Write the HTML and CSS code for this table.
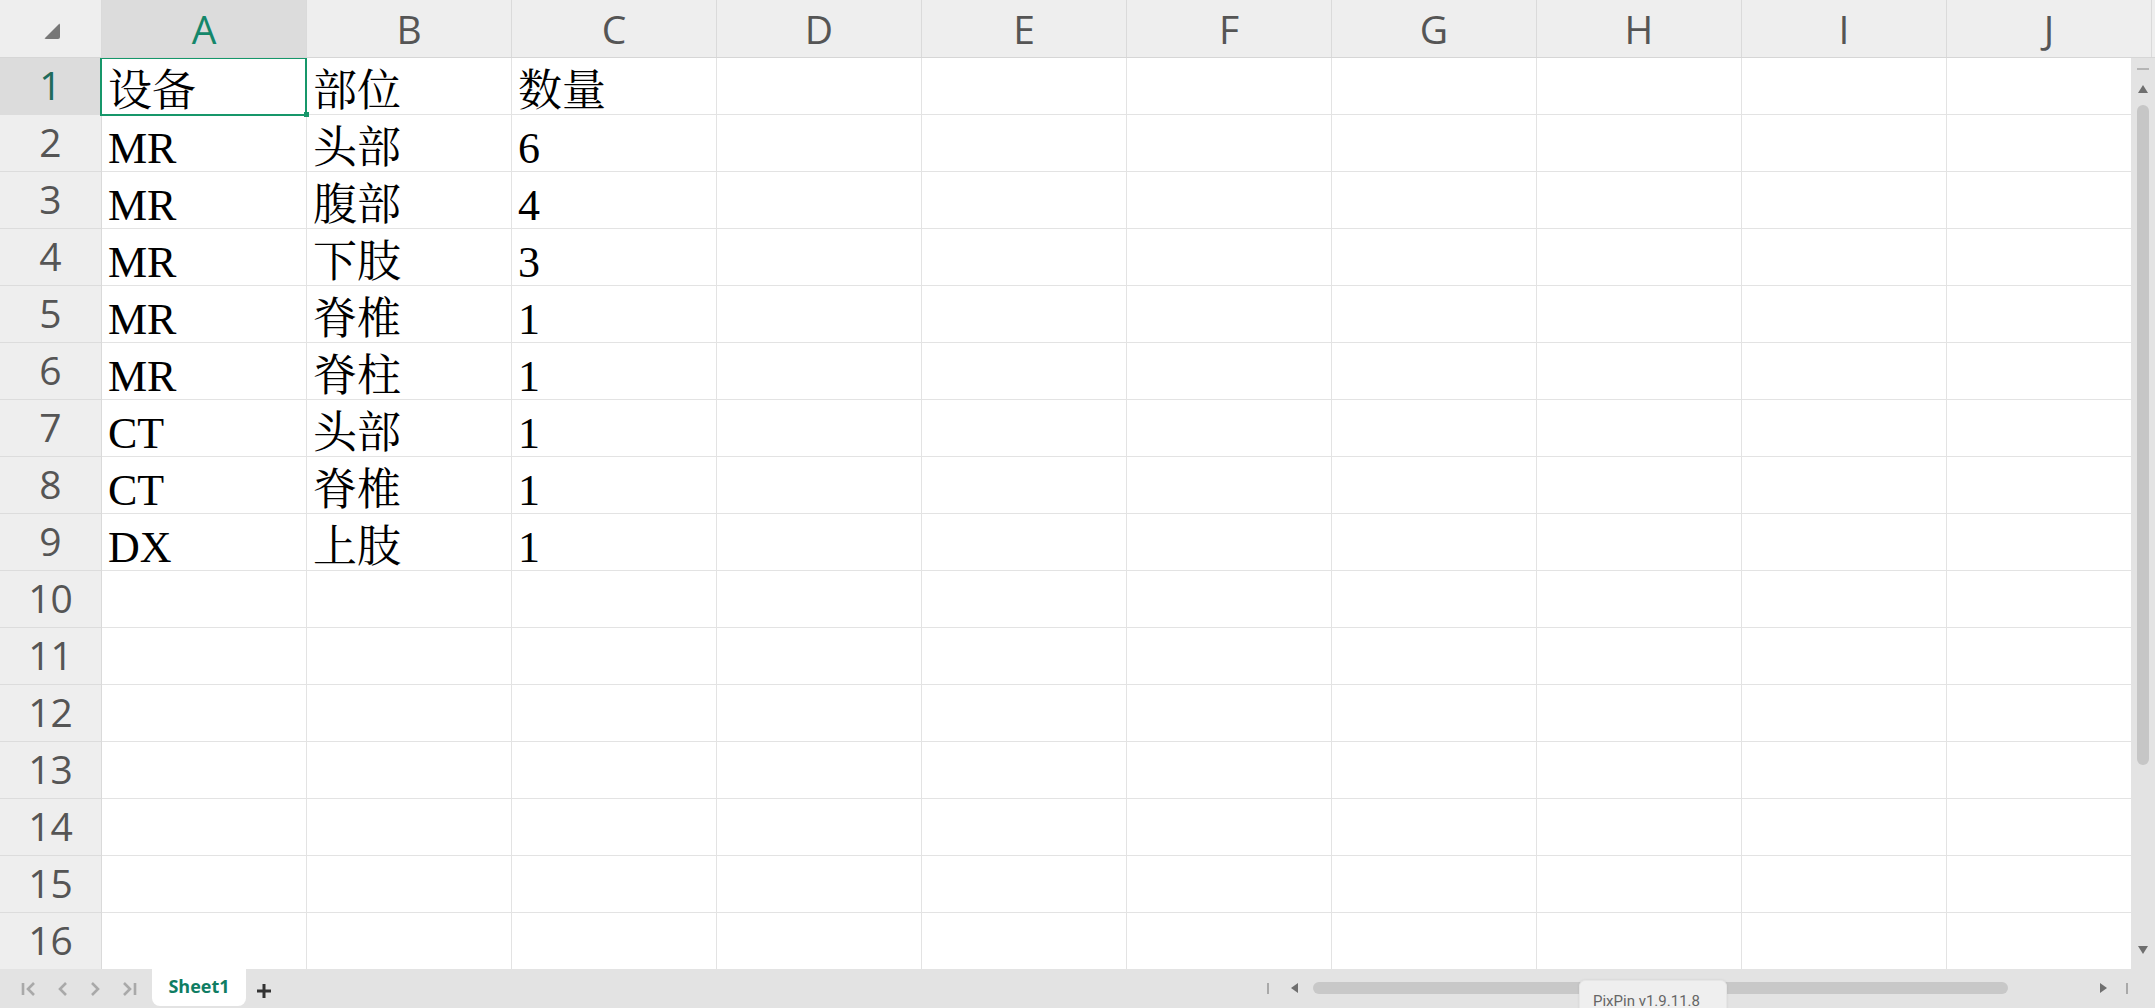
FILE: index.html
```html
<!DOCTYPE html>
<html lang="zh-CN">
<head>
    <meta charset="UTF-8">
    <meta name="viewport" content="width=device-width, initial-scale=1.0">
    <title>Sheet1</title>
    <link rel="stylesheet" href="styles.css">
</head>
<body>
    <div class="app">
        <div class="colheads">
            <div class="corner"><span class="tri"></span></div>
            <div class="ch active">A</div>
            <div class="ch">B</div>
            <div class="ch">C</div>
            <div class="ch">D</div>
            <div class="ch">E</div>
            <div class="ch">F</div>
            <div class="ch">G</div>
            <div class="ch">H</div>
            <div class="ch">I</div>
            <div class="ch">J</div>
        </div>

        <div class="main">
            <div class="sheet">
                <div class="row"><div class="rh active">1</div><div class="c sel">设备</div><div class="c">部位</div><div class="c">数量</div><div class="c"></div><div class="c"></div><div class="c"></div><div class="c"></div><div class="c"></div><div class="c"></div><div class="c"></div></div>
                <div class="row"><div class="rh">2</div><div class="c">MR</div><div class="c">头部</div><div class="c">6</div><div class="c"></div><div class="c"></div><div class="c"></div><div class="c"></div><div class="c"></div><div class="c"></div><div class="c"></div></div>
                <div class="row"><div class="rh">3</div><div class="c">MR</div><div class="c">腹部</div><div class="c">4</div><div class="c"></div><div class="c"></div><div class="c"></div><div class="c"></div><div class="c"></div><div class="c"></div><div class="c"></div></div>
                <div class="row"><div class="rh">4</div><div class="c">MR</div><div class="c">下肢</div><div class="c">3</div><div class="c"></div><div class="c"></div><div class="c"></div><div class="c"></div><div class="c"></div><div class="c"></div><div class="c"></div></div>
                <div class="row"><div class="rh">5</div><div class="c">MR</div><div class="c">脊椎</div><div class="c">1</div><div class="c"></div><div class="c"></div><div class="c"></div><div class="c"></div><div class="c"></div><div class="c"></div><div class="c"></div></div>
                <div class="row"><div class="rh">6</div><div class="c">MR</div><div class="c">脊柱</div><div class="c">1</div><div class="c"></div><div class="c"></div><div class="c"></div><div class="c"></div><div class="c"></div><div class="c"></div><div class="c"></div></div>
                <div class="row"><div class="rh">7</div><div class="c">CT</div><div class="c">头部</div><div class="c">1</div><div class="c"></div><div class="c"></div><div class="c"></div><div class="c"></div><div class="c"></div><div class="c"></div><div class="c"></div></div>
                <div class="row"><div class="rh">8</div><div class="c">CT</div><div class="c">脊椎</div><div class="c">1</div><div class="c"></div><div class="c"></div><div class="c"></div><div class="c"></div><div class="c"></div><div class="c"></div><div class="c"></div></div>
                <div class="row"><div class="rh">9</div><div class="c">DX</div><div class="c">上肢</div><div class="c">1</div><div class="c"></div><div class="c"></div><div class="c"></div><div class="c"></div><div class="c"></div><div class="c"></div><div class="c"></div></div>
                <div class="row"><div class="rh">10</div><div class="c"></div><div class="c"></div><div class="c"></div><div class="c"></div><div class="c"></div><div class="c"></div><div class="c"></div><div class="c"></div><div class="c"></div><div class="c"></div></div>
                <div class="row"><div class="rh">11</div><div class="c"></div><div class="c"></div><div class="c"></div><div class="c"></div><div class="c"></div><div class="c"></div><div class="c"></div><div class="c"></div><div class="c"></div><div class="c"></div></div>
                <div class="row"><div class="rh">12</div><div class="c"></div><div class="c"></div><div class="c"></div><div class="c"></div><div class="c"></div><div class="c"></div><div class="c"></div><div class="c"></div><div class="c"></div><div class="c"></div></div>
                <div class="row"><div class="rh">13</div><div class="c"></div><div class="c"></div><div class="c"></div><div class="c"></div><div class="c"></div><div class="c"></div><div class="c"></div><div class="c"></div><div class="c"></div><div class="c"></div></div>
                <div class="row"><div class="rh">14</div><div class="c"></div><div class="c"></div><div class="c"></div><div class="c"></div><div class="c"></div><div class="c"></div><div class="c"></div><div class="c"></div><div class="c"></div><div class="c"></div></div>
                <div class="row"><div class="rh">15</div><div class="c"></div><div class="c"></div><div class="c"></div><div class="c"></div><div class="c"></div><div class="c"></div><div class="c"></div><div class="c"></div><div class="c"></div><div class="c"></div></div>
                <div class="row"><div class="rh">16</div><div class="c"></div><div class="c"></div><div class="c"></div><div class="c"></div><div class="c"></div><div class="c"></div><div class="c"></div><div class="c"></div><div class="c"></div><div class="c"></div></div>
            </div>

            <div class="vscroll">
                <span class="dash"></span>
                <svg class="arrow" width="10" height="8" viewBox="0 0 10 8"><path d="M5 0 L10 8 L0 8 Z" fill="#6f6f6f"/></svg>
                <span class="vthumb"></span>
                <span class="vspace"></span>
                <svg class="arrow" width="10" height="8" viewBox="0 0 10 8"><path d="M0 0 L10 0 L5 8 Z" fill="#6f6f6f"/></svg>
            </div>
        </div>

        <div class="tabbar">
            <div class="nav">
                <svg width="16" height="16" viewBox="0 0 16 16"><path d="M2 2 V14 M13 2 L7 8 L13 14" stroke="#a9a9a9" stroke-width="2.6" fill="none"/></svg>
                <svg width="12" height="16" viewBox="0 0 12 16"><path d="M9 2 L3 8 L9 14" stroke="#a9a9a9" stroke-width="2.6" fill="none"/></svg>
                <svg width="12" height="16" viewBox="0 0 12 16"><path d="M3 2 L9 8 L3 14" stroke="#a9a9a9" stroke-width="2.6" fill="none"/></svg>
                <svg width="16" height="16" viewBox="0 0 16 16"><path d="M14 2 V14 M3 2 L9 8 L3 14" stroke="#a9a9a9" stroke-width="2.6" fill="none"/></svg>
            </div>
            <div class="tab">Sheet1</div>
            <svg class="add" width="16" height="16" viewBox="0 0 16 16"><path d="M8 1 V15 M1 8 H15" stroke="#333" stroke-width="3" fill="none"/></svg>

            <div class="hscroll">
                <span class="bar"></span>
                <svg width="7" height="10" viewBox="0 0 7 10"><path d="M7 0 L7 10 L0 5 Z" fill="#6f6f6f"/></svg>
                <span class="hthumb"></span>
                <svg width="7" height="10" viewBox="0 0 7 10"><path d="M0 0 L0 10 L7 5 Z" fill="#6f6f6f"/></svg>
                <span class="bar"></span>
            </div>

            <div class="tip">PixPin v1.9.11.8</div>
        </div>
    </div>
</body>
</html>
```

FILE: styles.css
```css
* {
    box-sizing: border-box;
}
body {
    margin: 0;
    overflow: hidden;
    background: #fff;
}
.app {
    width: 2155px;
    height: 1008px;
    display: flex;
    flex-direction: column;
}

/* column headers */
.colheads {
    display: flex;
    height: 58px;
    background: #eeeeee;
    border-bottom: 1px solid #d6d6d6;
    flex-shrink: 0;
}
.corner {
    width: 102px;
    border-right: 1px solid #dadada;
    position: relative;
    flex-shrink: 0;
}
.corner .tri {
    position: absolute;
    left: 44px;
    top: 23px;
    width: 0;
    height: 0;
    border-left: 16px solid transparent;
    border-bottom: 16px solid #777;
    border-radius: 2px;
}
.ch {
    width: 205px;
    flex-shrink: 0;
    border-right: 1px solid #dadada;
    text-align: center;
    font-family: "Open Sans", "Noto Sans", sans-serif;
    font-size: 39px;
    line-height: 57px;
    color: #555;
}
.ch.active {
    background: #dcdcdc;
    color: #14876a;
}

/* grid */
.main {
    display: flex;
    height: 911px;
    flex-shrink: 0;
}
.sheet {
    width: 2131px;
    overflow: hidden;
}
.row {
    display: flex;
    height: 57px;
}
.rh {
    width: 102px;
    flex-shrink: 0;
    background: #eeeeee;
    border-right: 1px solid #dadada;
    border-bottom: 1px solid #dcdcdc;
    text-align: center;
    font-family: "Open Sans", "Noto Sans", sans-serif;
    font-size: 39px;
    line-height: 53px;
    color: #555;
}
.rh.active {
    background: #dcdcdc;
    color: #1f6b5c;
}
.c {
    width: 205px;
    flex-shrink: 0;
    border-right: 1px solid #e3e3e3;
    border-bottom: 1px solid #e3e3e3;
    display: flex;
    align-items: flex-end;
    padding: 0 0 2px 6px;
    font-family: "Liberation Serif", "Noto Serif CJK SC", "Noto Sans CJK SC", serif;
    font-size: 44px;
    line-height: 40px;
    color: #000;
    white-space: nowrap;
    position: relative;
}
.c.sel::after {
    content: "";
    position: absolute;
    left: -2px;
    top: -1px;
    right: -1px;
    bottom: -2px;
    border: 2px solid #16976a;
}
.c.sel::before {
    content: "";
    position: absolute;
    right: -3px;
    bottom: -3px;
    width: 5px;
    height: 5px;
    background: #16976a;
    z-index: 1;
}

/* vertical scrollbar */
.vscroll {
    width: 24px;
    background: #e3e3e3;
    display: flex;
    flex-direction: column;
    align-items: center;
    padding-top: 10px;
}
.vscroll .dash {
    width: 12px;
    height: 2px;
    background: #b5b5b5;
}
.vscroll .arrow {
    margin-top: 15px;
}
.vthumb {
    margin-top: 12px;
    width: 12px;
    height: 660px;
    border-radius: 6px;
    background: #c6c6c6;
}
.vspace {
    flex: 1;
}
.vscroll .arrow:last-child {
    margin: 0 0 15px;
}

/* bottom bar */
.tabbar {
    flex: 1;
    background: #e3e3e3;
    display: flex;
    align-items: flex-start;
    position: relative;
}
.nav {
    display: flex;
    align-items: center;
    gap: 20px;
    padding: 12px 0 0 21px;
    width: 152px;
}
.tab {
    width: 94px;
    height: 37px;
    background: #fff;
    border-radius: 0 0 8px 8px;
    text-align: center;
    font-family: "Open Sans", "Noto Sans", sans-serif;
    font-weight: bold;
    font-size: 18px;
    line-height: 35px;
    color: #0f7d63;
}
.add {
    margin: 14px 0 0 10px;
}
.hscroll {
    display: flex;
    align-items: center;
    margin-left: 995px;
    margin-top: 13px;
}
.hscroll .bar {
    width: 2px;
    height: 11px;
    background: #a9a9a9;
}
.hscroll svg:first-of-type {
    margin-left: 22px;
}
.hthumb {
    width: 695px;
    height: 12px;
    border-radius: 6px;
    background: #c8c8c8;
    margin: 0 92px 0 15px;
}
.hscroll .bar:last-child {
    margin-left: 19px;
}
.tip {
    position: absolute;
    left: 1579px;
    top: 11px;
    width: 148px;
    height: 36px;
    background: #efefef;
    border: 1px solid #e6e6e6;
    border-radius: 6px;
    box-shadow: 0 0 3px rgba(0, 0, 0, 0.08);
    padding-left: 13px;
    font-family: Roboto, "Liberation Sans", sans-serif;
    font-size: 15px;
    line-height: 40px;
    color: #666;
}
```
